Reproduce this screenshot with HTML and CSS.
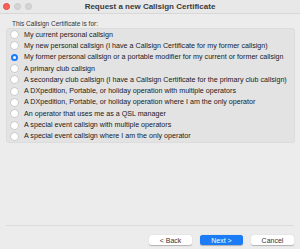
FILE: index.html
```html
<!DOCTYPE html>
<html lang="en">
<head>
    <meta charset="UTF-8">
    <title>Request a new Callsign Certificate</title>
    <link rel="stylesheet" href="styles.css">
</head>
<body>
<div class="window">
    <div class="titlebar">
        <div class="lights">
            <span class="light red"></span>
            <span class="light"></span>
            <span class="light"></span>
        </div>
        <div class="title">Request a new Callsign Certificate</div>
    </div>
    <div class="content">
        <div class="group-label">This Callsign Certificate is for:</div>
        <div class="group">
            <label class="option"><span class="radio"></span>My current personal callsign</label>
            <label class="option"><span class="radio"></span>My new personal callsign (I have a Callsign Certificate for my former callsign)</label>
            <label class="option"><span class="radio checked"></span>My former personal callsign or a portable modifier for my current or former callsign</label>
            <label class="option"><span class="radio"></span>A primary club callsign</label>
            <label class="option"><span class="radio"></span>A secondary club callsign (I have a Callsign Certificate for the primary club callsign)</label>
            <label class="option"><span class="radio"></span>A DXpedition, Portable, or holiday operation with multiple operators</label>
            <label class="option"><span class="radio"></span>A DXpedition, Portable, or holiday operation where I am the only operator</label>
            <label class="option"><span class="radio"></span>An operator that uses me as a QSL manager</label>
            <label class="option"><span class="radio"></span>A special event callsign with multiple operators</label>
            <label class="option"><span class="radio"></span>A special event callsign where I am the only operator</label>
        </div>
    </div>
    <div class="footer">
        <button class="btn">&lt; Back</button>
        <button class="btn primary">Next &gt;</button>
        <button class="btn">Cancel</button>
    </div>
</div>
</body>
</html>
```

FILE: styles.css
```css
html, body {
    height: 100%;
}

body {
    margin: 0;
    background-color: #ececec;
    font-family: "Liberation Sans", Arial, Helvetica, sans-serif;
    color: #222;
}

.window {
    height: 249px;
    display: flex;
    flex-direction: column;
    overflow: hidden;
}

.titlebar {
    height: 13px;
    display: flex;
    align-items: center;
    position: relative;
    background-color: #e8e8e8;
    border-bottom: 1px solid #d8d8d8;
}

.lights {
    display: flex;
    gap: 4px;
    padding-left: 3px;
    position: absolute;
    left: 0;
    top: 3px;
}

.light {
    width: 7px;
    height: 7px;
    border-radius: 50%;
    background-color: #d5d5d5;
    border: 0.5px solid #c8c8c8;
    box-sizing: border-box;
}

.light.red {
    background-color: #fe5f57;
    border-color: #e2463f;
}

.title {
    flex: 1;
    text-align: center;
    font-size: 8px;
    font-weight: bold;
    color: #3a3a3a;
}

.content {
    padding: 6px 5px 0 6px;
}

.group-label {
    font-size: 6.5px;
    line-height: 8px;
    color: #333;
    padding-left: 6px;
    height: 8px;
}

.group {
    background-color: #e3e3e3;
    border: 1px solid #dcdcdc;
    border-radius: 3px;
    padding: 0;
    display: flex;
    flex-direction: column;
}

.option {
    display: flex;
    align-items: center;
    height: 11.3px;
    font-size: 7.15px;
    color: #1a1a1a;
    white-space: nowrap;
}

.radio {
    width: 7px;
    height: 7px;
    border-radius: 50%;
    background-color: #fff;
    box-shadow: 0 0 0 0.5px #b8b8b8;
    margin-left: 4px;
    margin-right: 6px;
    flex-shrink: 0;
    box-sizing: border-box;
}

.radio.checked {
    background-color: #fff;
    border: 2.3px solid #1a7cf7;
    box-shadow: none;
}

.footer {
    margin-top: auto;
    margin-left: 6px;
    margin-right: 6px;
    border-top: 1px solid #dcdcdc;
    height: 24px;
    display: flex;
    justify-content: flex-end;
    align-items: flex-start;
    gap: 8px;
    padding-top: 9px;
    box-sizing: border-box;
}

.btn {
    width: 43px;
    height: 10px;
    padding: 0;
    font-family: "Liberation Sans", Arial, sans-serif;
    font-size: 7px;
    color: #333;
    background-color: #fff;
    border: none;
    border-radius: 2.5px;
    box-shadow: 0 0.5px 1px rgba(0, 0, 0, 0.25);
}

.btn.primary {
    background-color: #1b7cf5;
    color: #fff;
}
```
